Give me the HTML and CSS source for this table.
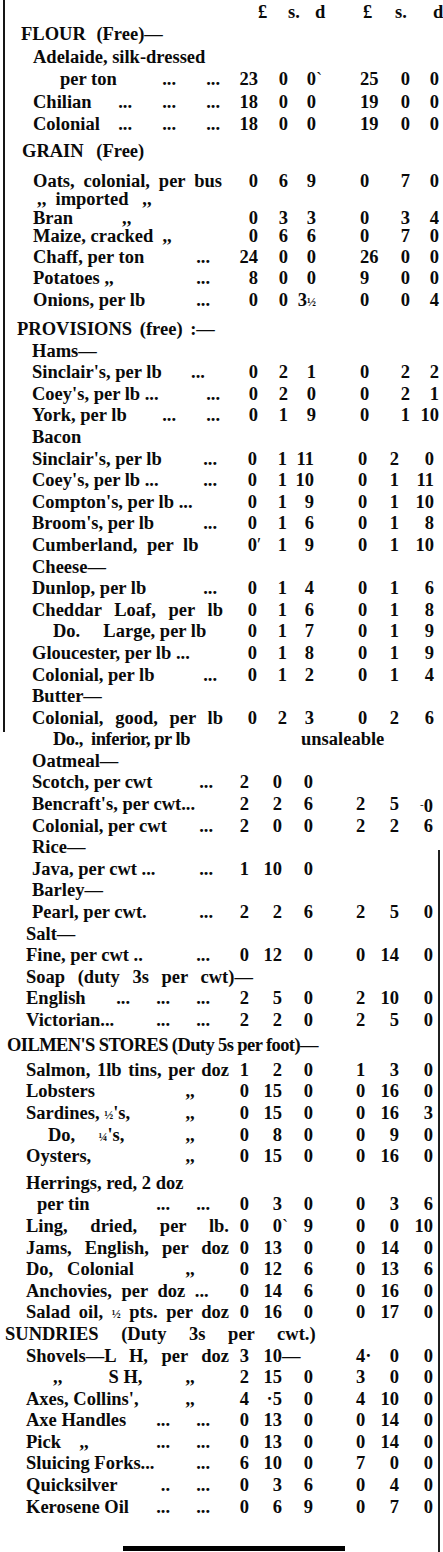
FILE: index.html
```html
<!DOCTYPE html>
<html lang="en">
<head>
<meta charset="utf-8">
<title>Prices Current</title>
<link rel="stylesheet" href="styles.css">
</head>
<body>
<main class="page">

<section class="blk top flour">
  <div class="row hdr"><div></div><span>£</span><span>s.</span><span>d</span><span>£</span><span>s.</span><span>d</span></div>
  <div class="sec s-flour">FLOUR (Free)—</div>
  <div class="it">Adelaide, silk-dressed</div>
  <div class="row x60"><div class="lab"><span class="t">per ton</span><i class="b">...</i><i class="c">...</i></div><span>23</span><span>0</span><span>0<span class="tk">ˋ</span></span><span>25</span><span>0</span><span>0</span></div>
  <div class="row"><div class="lab"><span class="t">Chilian</span><i class="a">...</i><i class="b">...</i><i class="c">...</i></div><span>18</span><span>0</span><span>0</span><span>19</span><span>0</span><span>0</span></div>
  <div class="row"><div class="lab"><span class="t">Colonial</span><i class="a">...</i><i class="b">...</i><i class="c">...</i></div><span>18</span><span>0</span><span>0</span><span>19</span><span>0</span><span>0</span></div>
</section>

<section class="blk top grain">
  <div class="sec s-grain h30">GRAIN (Free)</div>
  <div class="row h18 fill"><div class="lab"><span class="t">Oats, colonial, per bus</span></div><span>0</span><span>6</span><span>9</span><span>0</span><span>7</span><span>0</span></div>
  <div class="row h19 x37"><div class="lab"><span class="t">,,  imported   ,,</span></div></div>
  <div class="row h18"><div class="lab"><span class="t">Bran</span><i class="b l">,,</i></div><span>0</span><span>3</span><span>3</span><span>0</span><span>3</span><span>4</span></div>
  <div class="row h21"><div class="lab"><span class="t">Maize, cracked  ,,</span></div><span>0</span><span>6</span><span>6</span><span>0</span><span>7</span><span>0</span></div>
  <div class="row h21"><div class="lab"><span class="t">Chaff, per ton</span><i class="c">...</i></div><span>24</span><span>0</span><span>0</span><span>26</span><span>0</span><span>0</span></div>
  <div class="row h22"><div class="lab"><span class="t">Potatoes ,,</span><i class="c">...</i></div><span>8</span><span>0</span><span>0</span><span>9</span><span>0</span><span>0</span></div>
  <div class="row"><div class="lab"><span class="t">Onions, per lb</span><i class="c">...</i></div><span>0</span><span>0</span><span>3<span class="fr">½</span></span><span>0</span><span>0</span><span>4</span></div>
</section>

<section class="blk top prov">
  <div class="sec s-prov">PROVISIONS (free) :—</div>
  <div class="it">Hams—</div>
  <div class="row"><div class="lab"><span class="t">Sinclair's, per lb</span><i class="c m">...</i></div><span>0</span><span>2</span><span>1</span><span>0</span><span>2</span><span>2</span></div>
  <div class="row"><div class="lab"><span class="t">Coey's, per lb ...</span><i class="c">...</i></div><span>0</span><span>2</span><span>0</span><span>0</span><span>2</span><span>1</span></div>
  <div class="row"><div class="lab"><span class="t">York, per lb</span><i class="b">...</i><i class="c">...</i></div><span>0</span><span>1</span><span>9</span><span>0</span><span>1</span><span>10</span></div>
</section>

<section class="blk mid">
  <div class="it">Bacon</div>
  <div class="row"><div class="lab"><span class="t">Sinclair's, per lb</span><i class="c">...</i></div><span>0</span><span>1</span><span>11</span><span>0</span><span>2</span><span>0</span></div>
  <div class="row"><div class="lab"><span class="t">Coey's, per lb ...</span><i class="c">...</i></div><span>0</span><span>1</span><span>10</span><span>0</span><span>1</span><span>11</span></div>
  <div class="row"><div class="lab"><span class="t">Compton's, per lb ...</span></div><span>0</span><span>1</span><span>9</span><span>0</span><span>1</span><span>10</span></div>
  <div class="row"><div class="lab"><span class="t">Broom's, per lb</span><i class="c">...</i></div><span>0</span><span>1</span><span>6</span><span>0</span><span>1</span><span>8</span></div>
  <div class="row ws5"><div class="lab"><span class="t">Cumberland, per lb</span></div><span>0<span class="tk">′</span></span><span>1</span><span>9</span><span>0</span><span>1</span><span>10</span></div>
  <div class="it">Cheese—</div>
  <div class="row"><div class="lab"><span class="t">Dunlop, per lb</span><i class="c">...</i></div><span>0</span><span>1</span><span>4</span><span>0</span><span>1</span><span>6</span></div>
  <div class="row fill"><div class="lab"><span class="t">Cheddar Loaf, per lb</span></div><span>0</span><span>1</span><span>6</span><span>0</span><span>1</span><span>8</span></div>
  <div class="row x53"><div class="lab"><span class="t">Do.     Large, per lb</span></div><span>0</span><span>1</span><span>7</span><span>0</span><span>1</span><span>9</span></div>
  <div class="row"><div class="lab"><span class="t">Gloucester, per lb ...</span></div><span>0</span><span>1</span><span>8</span><span>0</span><span>1</span><span>9</span></div>
  <div class="row"><div class="lab"><span class="t">Colonial, per lb</span><i class="c">...</i></div><span>0</span><span>1</span><span>2</span><span>0</span><span>1</span><span>4</span></div>
  <div class="it">Butter—</div>
  <div class="row fill"><div class="lab"><span class="t">Colonial, good, per lb</span></div><span>0</span><span>2</span><span>3</span><span>0</span><span>2</span><span>6</span></div>
  <div class="row x53 tight"><div class="lab"><span class="t">Do.,  inferior, pr lb</span></div><span class="un">unsaleable</span></div>
</section>

<section class="blk lowa">
  <div class="it">Oatmeal—</div>
  <div class="row"><div class="lab"><span class="t">Scotch, per cwt</span><i class="c">...</i></div><span>2</span><span>0</span><span>0</span></div>
  <div class="row"><div class="lab"><span class="t">Bencraft's, per cwt...</span></div><span>2</span><span>2</span><span>6</span><span>2</span><span>5</span><span><span class="sm">-</span>0</span></div>
  <div class="row"><div class="lab"><span class="t">Colonial, per cwt</span><i class="c">...</i></div><span>2</span><span>0</span><span>0</span><span>2</span><span>2</span><span>6</span></div>
  <div class="it">Rice—</div>
  <div class="row"><div class="lab"><span class="t">Java, per cwt ...</span><i class="c">...</i></div><span>1</span><span>10</span><span>0</span></div>
  <div class="it">Barley—</div>
  <div class="row"><div class="lab"><span class="t">Pearl, per cwt.</span><i class="c">...</i></div><span>2</span><span>2</span><span>6</span><span>2</span><span>5</span><span>0</span></div>
</section>

<section class="blk low">
  <div class="it">Salt—</div>
  <div class="row"><div class="lab"><span class="t">Fine, per cwt ..</span><i class="c">...</i></div><span>0</span><span>12</span><span>0</span><span>0</span><span>14</span><span>0</span></div>
  <div class="it soap">Soap (duty 3s per cwt)—</div>
  <div class="row"><div class="lab"><span class="t">English</span><i class="a">...</i><i class="b">...</i><i class="c">...</i></div><span>2</span><span>5</span><span>0</span><span>2</span><span>10</span><span>0</span></div>
  <div class="row"><div class="lab"><span class="t">Victorian...</span><i class="b">...</i><i class="c">...</i></div><span>2</span><span>2</span><span>0</span><span>2</span><span>5</span><span>0</span></div>

  <div class="sec s-oil">OILMEN'S STORES (Duty 5s per foot)—</div>
  <div class="row first fill"><div class="lab"><span class="t">Salmon, 1lb tins, per doz</span></div><span>1</span><span>2</span><span>0</span><span>1</span><span>3</span><span>0</span></div>
  <div class="row"><div class="lab"><span class="t">Lobsters</span><i class="c m">,,</i></div><span>0</span><span>15</span><span>0</span><span>0</span><span>16</span><span>0</span></div>
  <div class="row"><div class="lab"><span class="t">Sardines, <span class="fr">½</span>'s,</span><i class="c m">,,</i></div><span>0</span><span>15</span><span>0</span><span>0</span><span>16</span><span>3</span></div>
  <div class="row x48"><div class="lab"><span class="t">Do,     <span class="fr">¼</span>'s,</span><i class="c m">,,</i></div><span>0</span><span>8</span><span>0</span><span>0</span><span>9</span><span>0</span></div>
  <div class="row"><div class="lab"><span class="t">Oysters,</span><i class="c m">,,</i></div><span>0</span><span>15</span><span>0</span><span>0</span><span>16</span><span>0</span></div>
  <div class="it gap">Herrings, red, 2 doz</div>
  <div class="row x37"><div class="lab"><span class="t">per tin</span><i class="b">...</i><i class="c">...</i></div><span>0</span><span>3</span><span>0</span><span>0</span><span>3</span><span>6</span></div>
  <div class="row fill"><div class="lab"><span class="t">Ling, dried, per lb.</span></div><span>0</span><span>0<span class="tk">ˋ</span></span><span>9</span><span>0</span><span>0</span><span>10</span></div>
  <div class="row fill"><div class="lab"><span class="t">Jams, English, per doz</span></div><span>0</span><span>13</span><span>0</span><span>0</span><span>14</span><span>0</span></div>
  <div class="row"><div class="lab"><span class="t">Do,   Colonial</span><i class="c m">,,</i></div><span>0</span><span>12</span><span>6</span><span>0</span><span>13</span><span>6</span></div>
  <div class="row ws5"><div class="lab"><span class="t">Anchovies, per doz ...</span></div><span>0</span><span>14</span><span>6</span><span>0</span><span>16</span><span>0</span></div>
  <div class="row fill"><div class="lab"><span class="t">Salad oil, <span class="fr">½</span> pts. per doz</span></div><span>0</span><span>16</span><span>0</span><span>0</span><span>17</span><span>0</span></div>

  <div class="sec s-sun">SUNDRIES (Duty 3s per cwt.)</div>
  <div class="row fill"><div class="lab"><span class="t">Shovels—L H, per doz</span></div><span>3</span><span>10</span><span class="lf">—</span><span>4·</span><span>0</span><span>0</span></div>
  <div class="row x53"><div class="lab"><span class="t">,,          S H,</span><i class="c m">,,</i></div><span>2</span><span>15</span><span>0</span><span>3</span><span>0</span><span>0</span></div>
  <div class="row"><div class="lab"><span class="t">Axes, Collins',</span><i class="c m">,,</i></div><span>4</span><span>·5</span><span>0</span><span>4</span><span>10</span><span>0</span></div>
  <div class="row"><div class="lab"><span class="t">Axe Handles</span><i class="b">...</i><i class="c">...</i></div><span>0</span><span>13</span><span>0</span><span>0</span><span>14</span><span>0</span></div>
  <div class="row"><div class="lab"><span class="t">Pick    ,,</span><i class="b">...</i><i class="c">...</i></div><span>0</span><span>13</span><span>0</span><span>0</span><span>14</span><span>0</span></div>
  <div class="row"><div class="lab"><span class="t">Sluicing Forks...</span><i class="c">...</i></div><span>6</span><span>10</span><span>0</span><span>7</span><span>0</span><span>0</span></div>
  <div class="row"><div class="lab"><span class="t">Quicksilver</span><i class="b">..</i><i class="c">...</i></div><span>0</span><span>3</span><span>6</span><span>0</span><span>4</span><span>0</span></div>
  <div class="row"><div class="lab"><span class="t">Kerosene Oil</span><i class="b">...</i><i class="c">...</i></div><span>0</span><span>6</span><span>9</span><span>0</span><span>7</span><span>0</span></div>
</section>

<div class="rule"></div>
</main>
</body>
</html>
```

FILE: styles.css
```css
html, body {
  margin: 0;
  padding: 0;
  background: #fff;
  overflow: hidden;
}

body {
  font-family: "Liberation Serif", "Times New Roman", serif;
  font-weight: 700;
  font-size: 18.5px;
  color: #0a0a0a;
}

.page {
  display: block;
  width: 443px;
  height: 1552px;
  box-sizing: border-box;
  padding-top: 2.1px;
  --h: 21.6px;
  background:
    linear-gradient(#151515, #151515) 3px 0 / 2px 732px no-repeat,
    linear-gradient(#202020, #202020) 438px 850px / 2px 702px no-repeat;
}

/* column sets for the differently-set parts of the column */
.top  { --cols: 228px 30px 30px 28px 74px 20px 29px; --ind: 33px; --p2: 44px; --tail: 8px;  --slot: 44px; --fr: 6px; }
.grain { --tail: 18px; }
.prov { --ind: 32px; }
.mid  { --cols: 227px 30px 30px 27px 65px 20px 35px; --ind: 32px; --p2: 44px; --tail: 10px; --slot: 44px; --fr: 4px; }
.lowa { --cols: 219px 30px 33px 31px 66px 20px 34px; --ind: 32px; --p2: 43px; --tail: 6px;  --slot: 42px; --fr: 0px; }
.low  { --cols: 219px 30px 33px 31px 66px 20px 34px; --ind: 26px; --p2: 43px; --tail: 9px;  --slot: 40px; --fr: -10px; }

.flour { --h: 22.4px; }

.row, .sec, .it {
  height: var(--h);
  line-height: 21.6px;
  white-space: nowrap;
}

.row {
  display: grid;
  grid-template-columns: var(--cols);
}

.it { padding-left: var(--ind); }

.lab {
  display: grid;
  grid-template-columns: minmax(0, 1fr) var(--slot) var(--slot) var(--slot) var(--tail);
  padding-left: var(--ind);
  min-width: 0;
}

.t {
  grid-area: 1 / 1 / 2 / -1;
  white-space: pre;
  min-width: 0;
}

/* lines the compositor spread out to the figures */
.fill .t {
  white-space: nowrap;
  text-align: justify;
  text-align-last: justify;
  margin-right: var(--fr);
}

.ws5 .t { word-spacing: 5px; }
.tight .t { letter-spacing: -0.5px; }

.lab i {
  font-style: normal;
  grid-row: 1;
  text-align: right;
}
.lab .a { grid-column: 2; }
.lab .b { grid-column: 3; }
.lab .c { grid-column: 4; }
.lab .m { text-align: center; }
.lab .l { text-align: left; }

.row > span { text-align: right; }
.row > :nth-child(5) { text-align: left; padding-left: var(--p2); }

.row > .lf { text-align: left; }

.un {
  grid-column: 4 / 6;
  text-align: center !important;
  padding-left: 14px;
}

/* header of money columns */
.hdr { --cols: 258px 30px 27px 48px 32px 38px 10px; }
.hdr > span,
.hdr > :nth-child(5) { text-align: left; padding-left: 0; }

/* section headings */
.s-flour { padding-left: 21px; word-spacing: 6px; }
.s-grain { padding-left: 22px; margin-top: 4.6px; word-spacing: 8px; }
.s-prov  { padding-left: 17px; margin-top: 7.4px; word-spacing: 3px; }
.s-oil   { padding-left: 7px;  margin-top: 3.2px; letter-spacing: -0.6px; }
.s-sun   { padding-left: 5px;  word-spacing: 18px; }
.soap    { word-spacing: 8px; }

.first { margin-top: 3.4px; }
.gap   { margin-top: 5px; }

/* odd line pitches in the Grain list */
.h18 { --h: 18px; }
.h19 { --h: 19px; }
.h21 { --h: 21px; }
.h22 { --h: 22px; }
.h30 { --h: 30px; }

/* special indents */
.x37 { --ind: 37px; }
.x48 { --ind: 48px; }
.x53 { --ind: 53px; }
.x60 { --ind: 60px; }

.fr { font-size: 12px; }
.tk { display: inline-block; width: 0; font-weight: 400; }
.sm { font-size: 11px; font-weight: 400; vertical-align: 4px; }

.rule {
  width: 222px;
  height: 5px;
  background: #000;
  margin: 27.3px 0 0 123px;
}
```
